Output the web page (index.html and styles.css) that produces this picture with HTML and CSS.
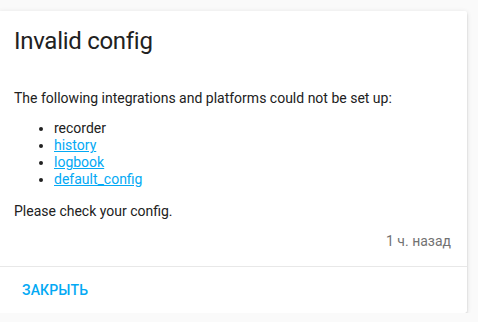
FILE: index.html
```html
<!DOCTYPE html>
<html lang="ru">
<head>
    <meta charset="UTF-8">
    <meta name="viewport" content="width=device-width, initial-scale=1.0">
    <title>Notification</title>
    <link rel="stylesheet" href="styles.css">
</head>
<body>
    <div class="card">
        <div class="card-header">Invalid config</div>
        <div class="card-content">
            <p>The following integrations and platforms could not be set up:</p>
            <ul>
                <li>recorder</li>
                <li><a href="#">history</a></li>
                <li><a href="#">logbook</a></li>
                <li><a href="#">default_config</a></li>
            </ul>
            <p>Please check your config.</p>
            <div class="time">1 ч. назад</div>
        </div>
        <div class="card-actions">
            <button class="btn">Закрыть</button>
        </div>
    </div>
</body>
</html>
```

FILE: styles.css
```css
body {
    margin: 0;
    background: #fafafa;
    font-family: Roboto, "Noto Sans", sans-serif;
    color: #212121;
    overflow: hidden;
}
.card {
    margin: 11px 11px 0 -2px;
    background: #fff;
    border-radius: 2px;
    box-shadow: 0 2px 2px 0 rgba(0,0,0,0.14), 0 1px 5px 0 rgba(0,0,0,0.12), 0 3px 1px -2px rgba(0,0,0,0.2);
}
.card-header {
    padding: 14px 16px 0;
    font-size: 24px;
    line-height: 32px;
    letter-spacing: -0.012em;
    color: #212121;
}
.card-content {
    padding: 33px 16px 16px;
    font-size: 14px;
    line-height: 17px;
}
.card-content p {
    margin: 0;
}
.card-content ul {
    margin: 13px 0 15px;
    padding-left: 40px;
}
.card-content a {
    color: #03a9f4;
}
.time {
    margin-top: 13px;
    text-align: right;
    color: #727272;
    font-size: 14px;
}
.card-actions {
    border-top: 1px solid #e8e8e8;
    padding: 5px 8px;
}
.btn {
    font-family: Roboto, sans-serif;
    background: none;
    border: none;
    color: #03a9f4;
    font-size: 14px;
    font-weight: 500;
    letter-spacing: 0.01em;
    text-transform: uppercase;
    padding: 8px 16px;
    line-height: 20px;
}
```
